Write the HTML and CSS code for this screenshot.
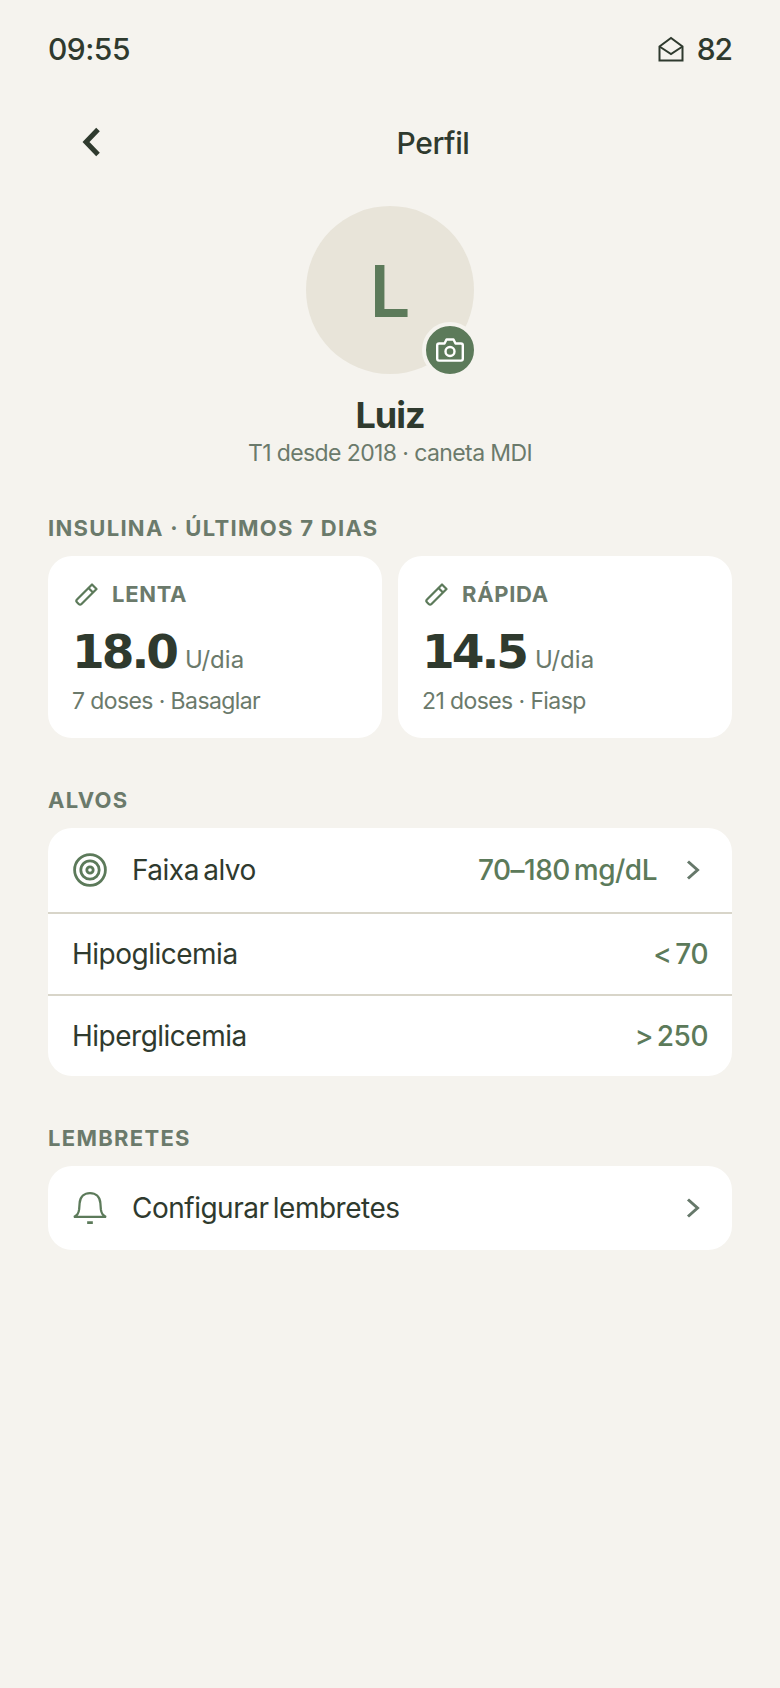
FILE: index.html
```html
<!DOCTYPE html>
<html lang="pt">
<head>
    <meta charset="UTF-8">
    <meta name="viewport" content="width=device-width, initial-scale=1.0">
    <title>Perfil</title>
    <link rel="stylesheet" href="styles.css">
</head>
<body>

    <main>
        <!-- Status bar -->
        <div class="status-bar">
            <span>09:55</span>
            <div class="status-right">
                <svg class="mail-icon" viewBox="0 0 26 26" fill="none" stroke="#2f3a2e" stroke-width="2">
                    <path d="M1.500 10.500 13 2l11.500 8.500V24.500H1.500Z"/>
                    <path d="M1.500 10.500 13 18l11.500-7.500"/>
                </svg>
                <span class="battery">82</span>
            </div>
        </div>

        <header class="top-bar">
            <svg class="back-icon" viewBox="0 0 20 30" fill="none" stroke="#2f3a2e" stroke-width="5">
                <path d="M17 2.500 5 15l12 12.500"/>
            </svg>
            <h1>Perfil</h1>
        </header>

        <section class="profile">
            <div class="avatar">
                L
                <div class="avatar-badge">
                    <svg viewBox="0 0 28 24" fill="none" stroke="#fff" stroke-width="2.400" stroke-linejoin="round">
                        <path d="M3 5.500h5.500L10.500 1.500h7l2 4H25a1.800 1.800 0 0 1 1.800 1.800v13.500a1.800 1.800 0 0 1-1.800 1.800H3a1.800 1.800 0 0 1-1.800-1.800V7.300A1.800 1.800 0 0 1 3 5.500Z"/>
                        <circle cx="14" cy="13.500" r="4.500"/>
                    </svg>
                </div>
            </div>
            <div class="profile-name">Luiz</div>
            <div class="profile-sub">T1 desde 2018 · caneta MDI</div>
        </section>

        <h2 class="section-title first">INSULINA · ÚLTIMOS 7 DIAS</h2>
        <div class="dose-grid">
            <div class="card dose-card">
                <div class="dose-head">
                    <svg class="pen-icon" viewBox="0 0 24 24" fill="none" stroke="#5c7a5a" stroke-width="2.200" stroke-linejoin="round">
                        <path d="M17 2.500 21.500 7 6.500 22a2 2 0 0 1-2.800 0L2 20.300a2 2 0 0 1 0-2.800Z"/>
                        <path d="M13.500 6 18 10.500"/>
                    </svg>
                    <span>LENTA</span>
                </div>
                <div class="dose-value"><strong>18.0</strong><span>U/dia</span></div>
                <div class="dose-note">7 doses · Basaglar</div>
            </div>
            <div class="card dose-card">
                <div class="dose-head">
                    <svg class="pen-icon" viewBox="0 0 24 24" fill="none" stroke="#5c7a5a" stroke-width="2.200" stroke-linejoin="round">
                        <path d="M17 2.500 21.500 7 6.500 22a2 2 0 0 1-2.800 0L2 20.300a2 2 0 0 1 0-2.800Z"/>
                        <path d="M13.500 6 18 10.500"/>
                    </svg>
                    <span>RÁPIDA</span>
                </div>
                <div class="dose-value"><strong>14.5</strong><span>U/dia</span></div>
                <div class="dose-note">21 doses · Fiasp</div>
            </div>
        </div>

        <h2 class="section-title">ALVOS</h2>
        <div class="card list-card">
            <div class="row row-main">
                <svg class="row-icon" viewBox="0 0 34 34" fill="none" stroke="#5c7a5a" stroke-width="2.800">
                    <circle cx="17" cy="17" r="15.400"/>
                    <circle cx="17" cy="17" r="9.200"/>
                    <circle cx="17" cy="17" r="3.200"/>
                </svg>
                <span class="row-label">Faixa alvo</span>
                <span class="row-value">70–180 mg/dL</span>
                <svg class="chevron" viewBox="0 0 14 20" fill="none" stroke="#66786a" stroke-width="3">
                    <path d="M2 1.500 11.500 10 2 18.500"/>
                </svg>
            </div>
            <div class="row">
                <span class="row-label">Hipoglicemia</span>
                <span class="row-value">&lt; 70</span>
            </div>
            <div class="row">
                <span class="row-label">Hiperglicemia</span>
                <span class="row-value">&gt; 250</span>
            </div>
        </div>

        <h2 class="section-title">LEMBRETES</h2>
        <div class="card list-card">
            <div class="row row-main">
                <svg class="row-icon" viewBox="0 0 36 34" fill="none" stroke="#5c7a5a" stroke-width="2.400">
                    <path d="M1 26.500c3.500-1.500 5-3.500 5.500-8L7 12C7.500 5 12 1.200 18 1.200S28.500 5 29 12l.5 6.500c.5 4.500 2 6.500 5.500 8Z"/>
                    <path d="M15 32.500h6" stroke-width="3"/>
                </svg>
                <span class="row-label">Configurar lembretes</span>
                <svg class="chevron" viewBox="0 0 14 20" fill="none" stroke="#66786a" stroke-width="3">
                    <path d="M2 1.500 11.500 10 2 18.500"/>
                </svg>
            </div>
        </div>
    </main>

</body>
</html>
```
FILE: styles.css
```css
body {
    font-family: Inter, 'Noto Sans', sans-serif;
    margin: 0;
    padding: 0;
    background-color: #f5f3ee;
    color: #2f3a2e;
    min-height: 100vh;
}

main {
    padding: 0 48px;
    box-sizing: border-box;
}

.status-bar {
    height: 98px;
    display: flex;
    justify-content: space-between;
    align-items: center;
    font-size: 30px;
    font-weight: 500;
    letter-spacing: -0.5px;
}

.status-right {
    display: flex;
    align-items: center;
    gap: 13px;
}

.battery {
    letter-spacing: -1px;
}

.mail-icon {
    width: 26px;
    height: 26px;
}

.top-bar {
    height: 90px;
    position: relative;
    display: flex;
    align-items: center;
    justify-content: center;
}

.top-bar h1 {
    margin: 0;
    font-size: 30px;
    font-weight: 500;
    letter-spacing: -0.4px;
    padding-left: 86px;
}

.back-icon {
    position: absolute;
    left: 33px;
    top: 29px;
    width: 20px;
    height: 30px;
}

.profile {
    display: flex;
    flex-direction: column;
    align-items: center;
    margin-top: 18px;
}

.avatar {
    width: 168px;
    height: 168px;
    border-radius: 50%;
    background-color: #e8e4d9;
    color: #5c7a5a;
    font-size: 72px;
    font-weight: 600;
    display: flex;
    align-items: center;
    justify-content: center;
    position: relative;
}

.avatar-badge {
    position: absolute;
    right: -4px;
    bottom: -4px;
    width: 48px;
    height: 48px;
    border: 4px solid #f5f3ee;
    border-radius: 50%;
    background-color: #5c7a5a;
    display: flex;
    align-items: center;
    justify-content: center;
}

.avatar-badge svg {
    width: 28px;
    height: 24px;
}

.profile-name {
    font-size: 36px;
    font-weight: 700;
    letter-spacing: -1px;
    line-height: 44px;
    margin-top: 19px;
}

.profile-sub {
    font-size: 23px;
    line-height: 30px;
    color: #6b7a6b;
    letter-spacing: -0.6px;
    padding-top: 1px;
}

.section-title {
    margin: 49px 0 15px 0;
    font-size: 22px;
    font-weight: 700;
    line-height: 26px;
    letter-spacing: 1.300px;
    color: #6b7a6b;
}

.section-title.first {
    margin-top: 47px;
}

.card {
    background-color: #fff;
    border-radius: 24px;
}

.dose-grid {
    display: grid;
    grid-template-columns: 1fr 1fr;
    gap: 16px;
}

.dose-card {
    height: 182px;
    padding: 25px 24px 0 24px;
    box-sizing: border-box;
}

.dose-head {
    display: flex;
    align-items: center;
    gap: 13px;
    font-size: 22px;
    font-weight: 700;
    line-height: 26px;
    letter-spacing: 0.700px;
    color: #6b7a6b;
    margin-left: 3px;
}

.pen-icon {
    width: 24px;
    height: 24px;
}

.dose-value {
    display: flex;
    align-items: baseline;
    gap: 9px;
    margin-top: 15px;
}

.dose-value strong {
    font-family: 'DejaVu Sans', sans-serif;
    font-size: 47px;
    font-weight: 700;
    line-height: 60px;
    letter-spacing: -3px;
}

.dose-value span {
    font-size: 24px;
    color: #6b7a6b;
}

.dose-note {
    font-size: 23px;
    line-height: 30px;
    color: #6b7a6b;
    letter-spacing: -0.600px;
    margin-top: 4px;
}

.list-card {
    overflow: hidden;
}

.row {
    height: 80px;
    padding: 0 24px;
    display: flex;
    align-items: center;
    border-top: 2px solid #d8d5c9;
    font-size: 28px;
}

.row-main {
    height: 84px;
    border-top: none;
}

.row-icon {
    width: 34px;
    height: 34px;
    margin: 0 25px 0 1px;
}

.row-label {
    flex: 1;
    letter-spacing: -0.500px;
    word-spacing: -3px;
}

.row-value {
    color: #5c7a5a;
    font-weight: 500;
    letter-spacing: -0.500px;
    word-spacing: -3px;
}

.chevron {
    width: 14px;
    height: 20px;
    margin-left: 29px;
    margin-right: 8px;
}
```
